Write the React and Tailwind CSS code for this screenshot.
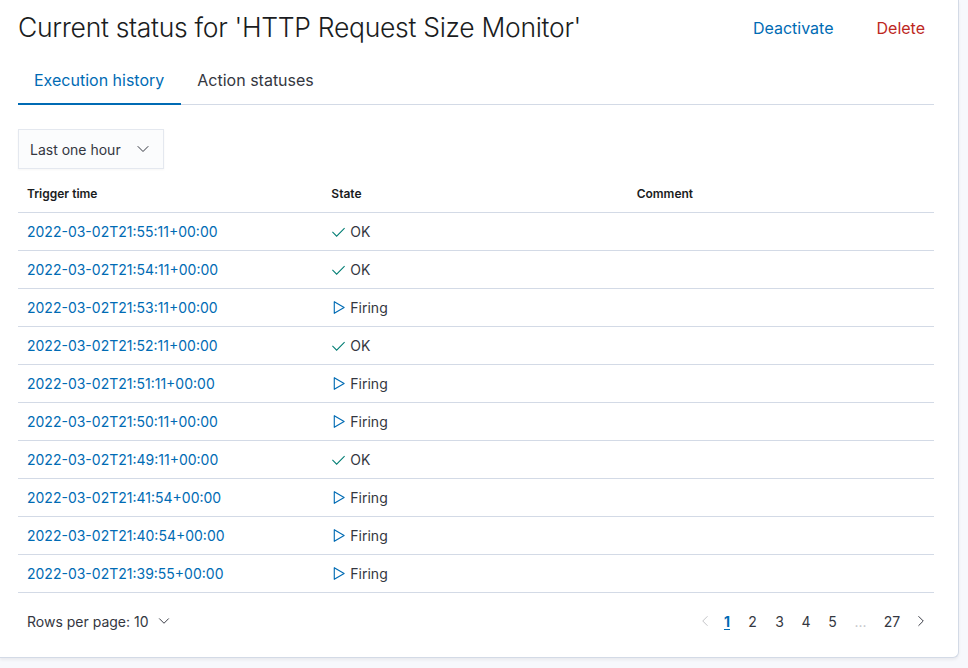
import { ChevronDown, ChevronLeft, ChevronRight } from 'lucide-react'

const rows = [
  { time: '2022-03-02T21:55:11+00:00', state: 'OK' },
  { time: '2022-03-02T21:54:11+00:00', state: 'OK' },
  { time: '2022-03-02T21:53:11+00:00', state: 'Firing' },
  { time: '2022-03-02T21:52:11+00:00', state: 'OK' },
  { time: '2022-03-02T21:51:11+00:00', state: 'Firing' },
  { time: '2022-03-02T21:50:11+00:00', state: 'Firing' },
  { time: '2022-03-02T21:49:11+00:00', state: 'OK' },
  { time: '2022-03-02T21:41:54+00:00', state: 'Firing' },
  { time: '2022-03-02T21:40:54+00:00', state: 'Firing' },
  { time: '2022-03-02T21:39:55+00:00', state: 'Firing' },
]

function StateIcon({ state }) {
  if (state === 'OK') {
    return (
      <svg width="15" height="15" viewBox="0 0 16 16" className="shrink-0">
        <path d="M1.5 8.5l4.5 4.5 8.5-8.5" fill="none" stroke="#017d73" strokeWidth="1.1" />
      </svg>
    )
  }
  return (
    <svg width="15" height="15" viewBox="0 0 16 16" className="shrink-0">
      <path d="M3.5 1.8v12.4l10.5-6.2z" fill="none" stroke="#006bb4" strokeWidth="1.2" strokeLinejoin="round" />
    </svg>
  )
}

export default function App() {
  return (
    <div className="h-[668px] w-[968px] bg-[#f7f8fc] font-['Inter',sans-serif] text-[#343741] overflow-hidden">
      <div className="w-[959px] h-[658px] bg-white border-r border-b border-[#d3dae6] rounded-br-md shadow-[0_2px_3px_rgba(0,0,0,0.06)] px-[18px] pr-[24px]">
        {/* Header */}
        <div className="flex items-center justify-between h-[56px]">
          <h1 className="text-[26.5px] font-light text-[#1a1c21] tracking-[-0.3px]">
            Current status for 'HTTP Request Size Monitor'
          </h1>
          <div className="flex items-center gap-[43px] text-[16px] mr-[9px]">
            <button className="text-[#006bb4]">Deactivate</button>
            <button className="text-[#bd271e]">Delete</button>
          </div>
        </div>

        {/* Tabs */}
        <div className="flex border-b border-[#d3dae6] h-[49px]">
          <div className="pl-4 pr-[17px] flex items-center text-[16px] text-[#006bb4] border-b-2 border-[#006bb4] -mb-px">
            Execution history
          </div>
          <div className="px-4 flex items-center text-[16px] text-[#343741]">Action statuses</div>
        </div>

        {/* Range select */}
        <div className="mt-[24px]">
          <div className="w-[146px] h-[40px] bg-[#fbfcfd] border border-[#e4e8ef] shadow-[0_1px_2px_rgba(0,0,0,0.04)] flex items-center justify-between pl-[11px] pr-[10px] text-[14px]">
            <span>Last one hour</span>
            <ChevronDown size={20} strokeWidth={1.2} className="text-[#343741]" />
          </div>
        </div>

        {/* Table */}
        <div className="mt-[7px]">
          <div className="grid grid-cols-3 h-[37px] items-center border-b border-[#d3dae6] text-[12px] font-semibold text-[#1a1c21]">
            <div className="px-[9px]">Trigger time</div>
            <div className="px-2">State</div>
            <div className="px-2">Comment</div>
          </div>
          {rows.map((r, i) => (
            <div key={i} className="grid grid-cols-3 h-[38px] items-center border-b border-[#d3dae6] text-[14px]">
              <div className="px-[9px] text-[#006bb4]">{r.time}</div>
              <div className="px-2 flex items-center gap-[4px]">
                <StateIcon state={r.state} />
                <span>{r.state}</span>
              </div>
              <div className="px-2" />
            </div>
          ))}
        </div>

        {/* Pagination */}
        <div className="flex items-center justify-between h-[56px] pl-[9px]">
          <div className="flex items-center gap-[6px] text-[14px]">
            <span>Rows per page: 10</span>
            <ChevronDown size={18} strokeWidth={1.3} />
          </div>
          <div className="flex items-center text-[14px] mr-[4px]">
            <ChevronLeft size={18} strokeWidth={1.3} className="text-[#c2c3c6] mr-[1px]" />
            <span className="w-[24px] text-center font-bold text-[#006bb4] underline underline-offset-2">1</span>
            <span className="w-[27px] text-center">2</span>
            <span className="w-[27px] text-center">3</span>
            <span className="w-[26px] text-center">4</span>
            <span className="w-[27px] text-center">5</span>
            <span className="w-[29px] text-center text-[#c2c3c6]">...</span>
            <span className="w-[34px] text-center">27</span>
            <ChevronRight size={18} strokeWidth={1.3} className="ml-[3px]" />
          </div>
        </div>
      </div>
    </div>
  )
}
